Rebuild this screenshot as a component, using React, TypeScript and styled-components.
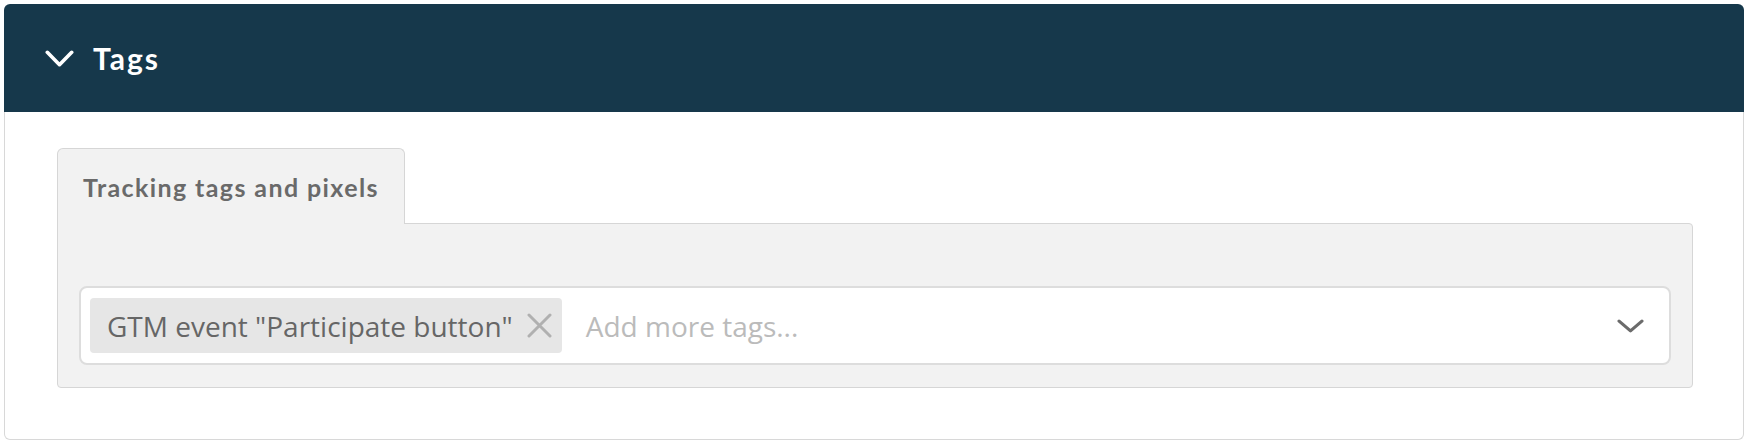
import React from 'react';
import styled, { createGlobalStyle } from 'styled-components';

const GlobalStyle = createGlobalStyle`
  html, body {
    margin: 0;
    padding: 0;
    background: #ffffff;
  }
  body {
    font-family: "Open Sans", "Noto Sans", sans-serif;
  }
`;

const Page = styled.div`
  width: 1748px;
  padding: 4px;
  box-sizing: border-box;
`;

const Card = styled.section`
  display: flex;
  flex-direction: column;
`;

const Header = styled.div`
  height: 108px;
  background: #16384b;
  border-radius: 6px 6px 0 0;
  display: flex;
  align-items: center;
  gap: 19px;
  padding-left: 41px;
  color: #ffffff;
`;

const Title = styled.h2`
  margin: 0;
  font-family: "Lato", sans-serif;
  font-weight: 700;
  font-size: 30px;
  letter-spacing: 2px;
`;

const Body = styled.div`
  border: 1px solid #d8d8d8;
  border-top: none;
  border-radius: 0 0 6px 6px;
  padding: 36px 50px 51px 52px;
`;

const TabBar = styled.div`
  display: flex;
`;

const Tab = styled.div`
  position: relative;
  z-index: 1;
  height: 75px;
  margin-bottom: -1px;
  padding: 0 25px;
  display: flex;
  align-items: center;
  background: #f2f2f2;
  border: 1px solid #d6d6d6;
  border-bottom: none;
  border-radius: 6px 6px 0 0;
  font-family: "Lato", sans-serif;
  font-weight: 700;
  font-size: 25px;
  letter-spacing: 1.4px;
  color: #6a6a6a;
`;

const Panel = styled.div`
  background: #f2f2f2;
  border: 1px solid #d6d6d6;
  border-radius: 0 4px 4px 4px;
  padding: 62px 21px 22px 21px;
`;

const TagInput = styled.div`
  height: 79px;
  box-sizing: border-box;
  background: #ffffff;
  border: 2px solid #dddddd;
  border-radius: 8px;
  display: flex;
  align-items: center;
  padding: 0 25px 0 9px;
`;

const Chip = styled.span`
  height: 55px;
  display: flex;
  align-items: center;
  gap: 14px;
  padding: 0 10px 0 17px;
  background: #e6e6e6;
  border-radius: 4px;
  font-family: "Open Sans", sans-serif;
  font-size: 28px;
  color: #666666;
  white-space: nowrap;
`;

const Placeholder = styled.span`
  flex: 1;
  margin-left: 24px;
  font-family: "Open Sans", sans-serif;
  font-size: 28px;
  color: #bbbbbb;
`;

const Chevron = ({ color, width, height, stroke }: { color: string; width: number; height: number; stroke: number }) => (
  <svg width={width} height={height} viewBox={`0 0 ${width} ${height}`} fill="none">
    <polyline
      points={`${stroke / 2 + 0.5},${stroke / 2 + 0.5} ${width / 2},${height - stroke / 2 - 0.5} ${width - stroke / 2 - 0.5},${stroke / 2 + 0.5}`}
      stroke={color}
      strokeWidth={stroke}
      strokeLinecap="round"
      strokeLinejoin="round"
    />
  </svg>
);

const CloseIcon = () => (
  <svg width="25" height="25" viewBox="0 0 25 25" fill="none">
    <path d="M2 2 L23 23 M23 2 L2 23" stroke="#b0b0b0" strokeWidth="3" strokeLinecap="round" />
  </svg>
);

export default function App() {
  return (
    <>
      <GlobalStyle />
      <Page>
        <Card>
          <Header>
            <Chevron color="#ffffff" width={29} height={17} stroke={3.6} />
            <Title>Tags</Title>
          </Header>
          <Body>
            <TabBar>
              <Tab>Tracking tags and pixels</Tab>
            </TabBar>
            <Panel>
              <TagInput>
                <Chip>
                  GTM event "Participate button"
                  <CloseIcon />
                </Chip>
                <Placeholder>Add more tags...</Placeholder>
                <Chevron color="#6b6b6b" width={27} height={14} stroke={3.2} />
              </TagInput>
            </Panel>
          </Body>
        </Card>
      </Page>
    </>
  );
}
